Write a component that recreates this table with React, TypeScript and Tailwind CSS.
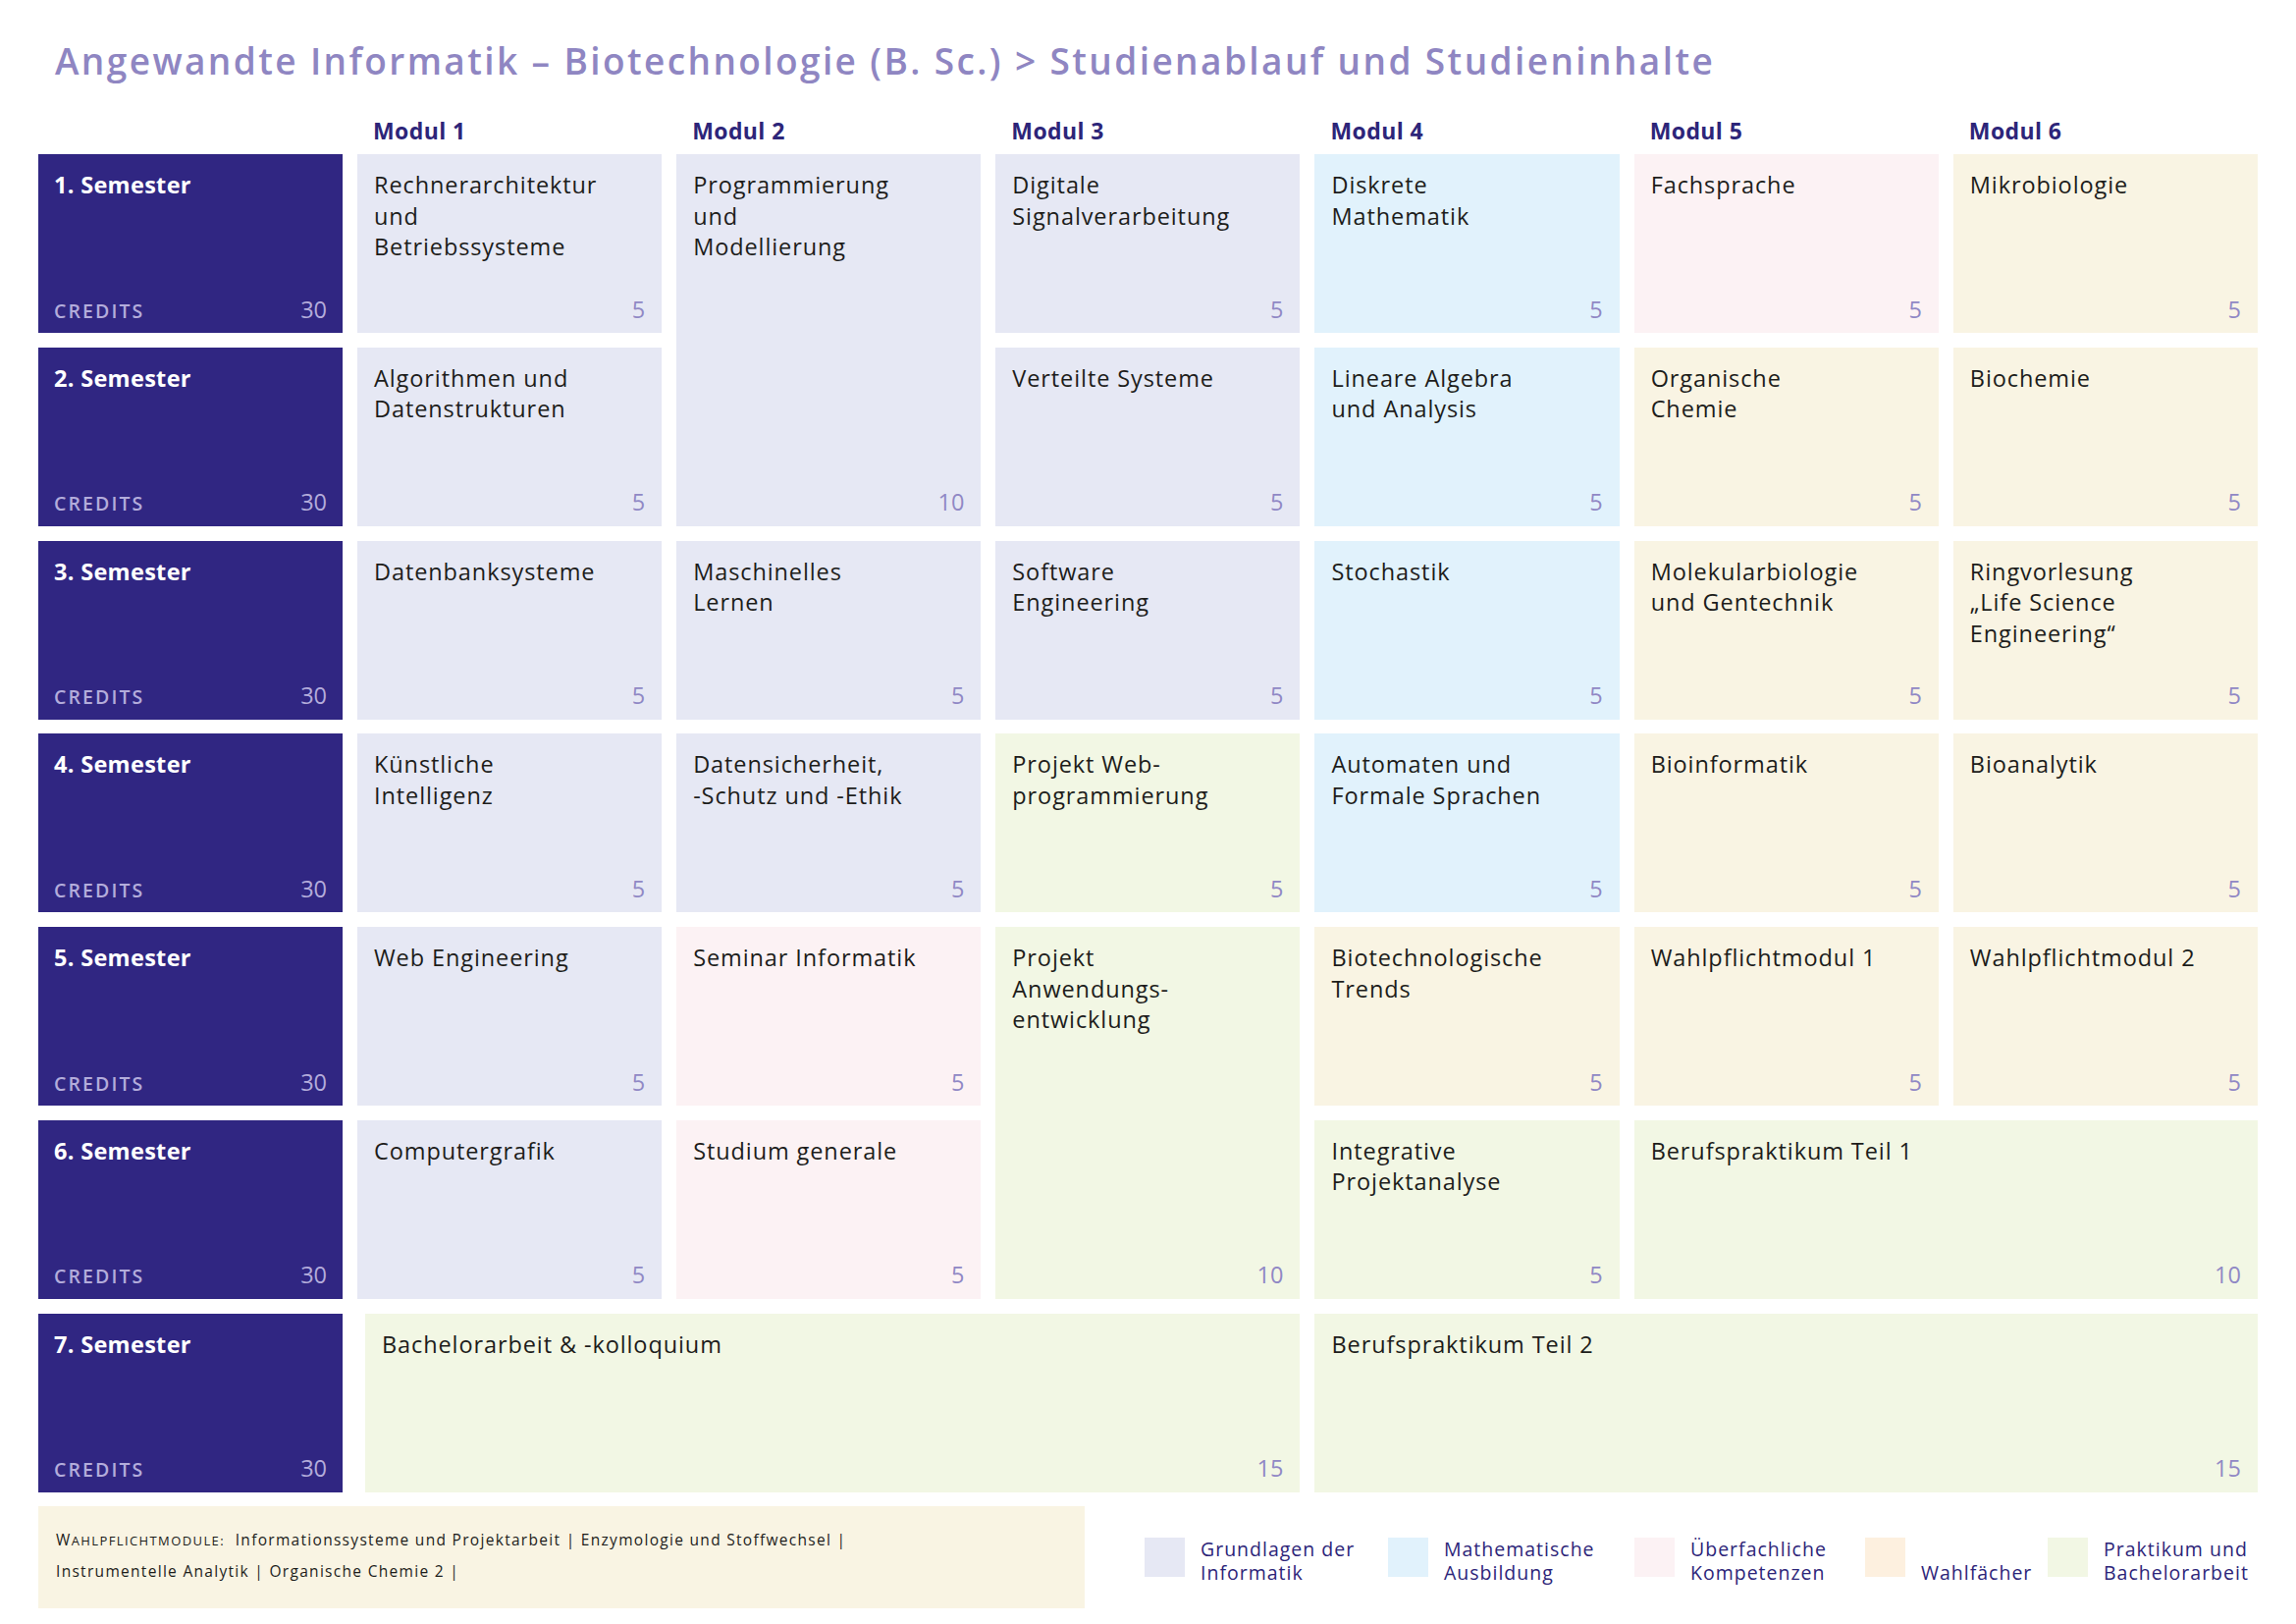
import React from "react";

type Cell = { lines: string[]; credit: number; bg: string; pos: string };

const LAV = "bg-[#e6e8f4]";
const BLUE = "bg-[#e1f2fc]";
const PINK = "bg-[#fcf2f4]";
const CREAM = "bg-[#f9f4e3]";
const GREEN = "bg-[#f2f7e4]";

const cells: Cell[] = [
  { lines: ["Rechnerarchitektur", "und", "Betriebssysteme"], credit: 5, bg: LAV, pos: "col-start-2 row-start-1" },
  { lines: ["Programmierung", "und", "Modellierung"], credit: 10, bg: LAV, pos: "col-start-3 row-start-1 row-span-2" },
  { lines: ["Digitale", "Signalverarbeitung"], credit: 5, bg: LAV, pos: "col-start-4 row-start-1" },
  { lines: ["Diskrete", "Mathematik"], credit: 5, bg: BLUE, pos: "col-start-5 row-start-1" },
  { lines: ["Fachsprache"], credit: 5, bg: PINK, pos: "col-start-6 row-start-1" },
  { lines: ["Mikrobiologie"], credit: 5, bg: CREAM, pos: "col-start-7 row-start-1" },

  { lines: ["Algorithmen und", "Datenstrukturen"], credit: 5, bg: LAV, pos: "col-start-2 row-start-2" },
  { lines: ["Verteilte Systeme"], credit: 5, bg: LAV, pos: "col-start-4 row-start-2" },
  { lines: ["Lineare Algebra", "und Analysis"], credit: 5, bg: BLUE, pos: "col-start-5 row-start-2" },
  { lines: ["Organische", "Chemie"], credit: 5, bg: CREAM, pos: "col-start-6 row-start-2" },
  { lines: ["Biochemie"], credit: 5, bg: CREAM, pos: "col-start-7 row-start-2" },

  { lines: ["Datenbanksysteme"], credit: 5, bg: LAV, pos: "col-start-2 row-start-3" },
  { lines: ["Maschinelles", "Lernen"], credit: 5, bg: LAV, pos: "col-start-3 row-start-3" },
  { lines: ["Software", "Engineering"], credit: 5, bg: LAV, pos: "col-start-4 row-start-3" },
  { lines: ["Stochastik"], credit: 5, bg: BLUE, pos: "col-start-5 row-start-3" },
  { lines: ["Molekularbiologie", "und Gentechnik"], credit: 5, bg: CREAM, pos: "col-start-6 row-start-3" },
  { lines: ["Ringvorlesung", "\u201ELife Science", "Engineering\u201C"], credit: 5, bg: CREAM, pos: "col-start-7 row-start-3" },

  { lines: ["Künstliche", "Intelligenz"], credit: 5, bg: LAV, pos: "col-start-2 row-start-4" },
  { lines: ["Datensicherheit,", "-Schutz und -Ethik"], credit: 5, bg: LAV, pos: "col-start-3 row-start-4" },
  { lines: ["Projekt Web-", "programmierung"], credit: 5, bg: GREEN, pos: "col-start-4 row-start-4" },
  { lines: ["Automaten und", "Formale Sprachen"], credit: 5, bg: BLUE, pos: "col-start-5 row-start-4" },
  { lines: ["Bioinformatik"], credit: 5, bg: CREAM, pos: "col-start-6 row-start-4" },
  { lines: ["Bioanalytik"], credit: 5, bg: CREAM, pos: "col-start-7 row-start-4" },

  { lines: ["Web Engineering"], credit: 5, bg: LAV, pos: "col-start-2 row-start-5" },
  { lines: ["Seminar Informatik"], credit: 5, bg: PINK, pos: "col-start-3 row-start-5" },
  { lines: ["Projekt", "Anwendungs-", "entwicklung"], credit: 10, bg: GREEN, pos: "col-start-4 row-start-5 row-span-2" },
  { lines: ["Biotechnologische", "Trends"], credit: 5, bg: CREAM, pos: "col-start-5 row-start-5" },
  { lines: ["Wahlpflichtmodul 1"], credit: 5, bg: CREAM, pos: "col-start-6 row-start-5" },
  { lines: ["Wahlpflichtmodul 2"], credit: 5, bg: CREAM, pos: "col-start-7 row-start-5" },

  { lines: ["Computergrafik"], credit: 5, bg: LAV, pos: "col-start-2 row-start-6" },
  { lines: ["Studium generale"], credit: 5, bg: PINK, pos: "col-start-3 row-start-6" },
  { lines: ["Integrative", "Projektanalyse"], credit: 5, bg: GREEN, pos: "col-start-5 row-start-6" },
  { lines: ["Berufspraktikum Teil 1"], credit: 10, bg: GREEN, pos: "col-start-6 row-start-6 col-span-2" },

  { lines: ["Bachelorarbeit & -kolloquium"], credit: 15, bg: GREEN, pos: "col-start-2 row-start-7 col-span-3 ml-[8px]" },
  { lines: ["Berufspraktikum Teil 2"], credit: 15, bg: GREEN, pos: "col-start-5 row-start-7 col-span-3" },
];

const semesterPos = [
  "col-start-1 row-start-1",
  "col-start-1 row-start-2",
  "col-start-1 row-start-3",
  "col-start-1 row-start-4",
  "col-start-1 row-start-5",
  "col-start-1 row-start-6",
  "col-start-1 row-start-7",
];

function ModuleBox({ c }: { c: Cell }) {
  return (
    <div className={`${c.pos} ${c.bg} flex flex-col justify-between pl-[17px] pr-[17px] pt-[16px] pb-[8px]`}>
      <div className="text-[23.5px] leading-[31.5px] tracking-[0.9px] text-[#1d1d1b]">
        {c.lines.map((l, i) => (
          <div key={i} className="whitespace-nowrap">
            {l}
          </div>
        ))}
      </div>
      <div className="text-right text-[23.5px] leading-[31.5px] font-medium text-[#9088c5]">{c.credit}</div>
    </div>
  );
}

function SemesterBox({ n, pos }: { n: number; pos: string }) {
  return (
    <div className={`${pos} bg-[#302682] flex flex-col justify-between px-[16px] pt-[16px] pb-[8px]`}>
      <div className="text-[23.5px] leading-[31.5px] font-bold text-white tracking-[0.3px]">{n}. Semester</div>
      <div className="flex items-baseline justify-between text-[#b3acdb]">
        <span className="text-[19.5px] font-semibold tracking-[2.1px]">CREDITS</span>
        <span className="text-[23.5px] leading-[31.5px] font-medium">30</span>
      </div>
    </div>
  );
}

const legend = [
  { l1: "Grundlagen der", l2: "Informatik", bg: "bg-[#e6e8f4]", w: "w-[248px]" },
  { l1: "Mathematische", l2: "Ausbildung", bg: "bg-[#e1f2fc]", w: "w-[251px]" },
  { l1: "Überfachliche", l2: "Kompetenzen", bg: "bg-[#fcf2f4]", w: "w-[235px]" },
  { l1: "", l2: "Wahlfächer", bg: "bg-[#fdf0df]", w: "w-[186px]" },
  { l1: "Praktikum und", l2: "Bachelorarbeit", bg: "bg-[#f2f7e4]", w: "w-[200px]" },
];

export default function App() {
  return (
    <div className="w-[2339px] h-[1654px] bg-white overflow-hidden font-['Open_Sans',sans-serif]">
      <h1 className="pl-[56px] pt-[40px] text-[37px] leading-[44px] font-semibold text-[#8f86c2] tracking-[2.4px] whitespace-nowrap">
        Angewandte Informatik – Biotechnologie (B. Sc.) &gt; Studienablauf und Studieninhalte
      </h1>

      <div className="ml-[39px] w-[2261px] mt-[35px] mb-[10px] h-[28px] grid grid-cols-[310px_repeat(6,minmax(0,1fr))] gap-x-[15px]">
        <div />
        {[1, 2, 3, 4, 5, 6].map((m) => (
          <div key={m} className="pl-[16px] text-[23px] leading-[28px] font-bold text-[#2d2579] tracking-[0.4px]">
            Modul {m}
          </div>
        ))}
      </div>

      <div className="ml-[39px] w-[2261px] grid grid-cols-[310px_repeat(6,minmax(0,1fr))] grid-rows-[repeat(7,182px)] gap-x-[15px] gap-y-[14.8px]">
        {semesterPos.map((p, i) => (
          <SemesterBox key={i} n={i + 1} pos={p} />
        ))}
        {cells.map((c, i) => (
          <ModuleBox key={i} c={c} />
        ))}
      </div>

      <div className="flex mt-[14px] ml-[39px]">
        <div className="w-[1066px] h-[104px] bg-[#f9f4e3] pl-[18px] pt-[19px] text-[15.5px] leading-[31.7px] tracking-[1.3px] text-[#1d1d1b]">
          <div className="whitespace-nowrap">
            <span>W</span>
            <span className="text-[13px] tracking-[1.4px]">AHLPFLICHTMODULE:</span>&nbsp; Informationssysteme und Projektarbeit | Enzymologie und Stoffwechsel |
          </div>
          <div className="whitespace-nowrap">Instrumentelle Analytik | Organische Chemie 2 |</div>
        </div>

        <div className="flex ml-[61px] pt-[32px]">
          {legend.map((g, i) => (
            <div key={i} className={`${g.w} flex items-end h-[40px]`}>
              <div className={`${g.bg} w-[41px] h-[40px] shrink-0`} />
              <div className="ml-[16px] mb-[-8px] text-[19.5px] leading-[24px] font-medium tracking-[1px] text-[#2d2579] whitespace-nowrap">
                {g.l1 && <div>{g.l1}</div>}
                <div>{g.l2}</div>
              </div>
            </div>
          ))}
        </div>
      </div>
    </div>
  );
}
